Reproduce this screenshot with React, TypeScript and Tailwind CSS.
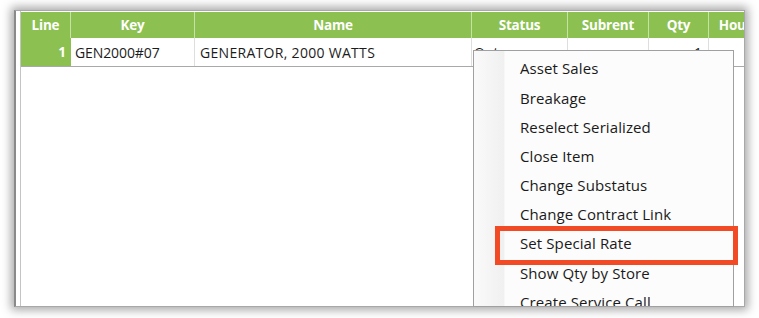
const columns = [
  { label: "Line", w: "w-[50px]" },
  { label: "Key", w: "w-[124px]" },
  { label: "Name", w: "w-[277px]" },
  { label: "Status", w: "w-[96px]" },
  { label: "Subrent", w: "w-[81px]" },
  { label: "Qty", w: "w-[60px]" },
  { label: "Hours", w: "w-[60px]" },
];

const menuItems = [
  "Asset Sales",
  "Breakage",
  "Reselect Serialized",
  "Close Item",
  "Change Substatus",
  "Change Contract Link",
  "Set Special Rate",
  "Show Qty by Store",
  "Create Service Call",
];

export default function App() {
  return (
    <div
      className="relative w-[759px] h-[318px] bg-white overflow-hidden"
      style={{ fontFamily: '"Open Sans", "Noto Sans", sans-serif' }}
    >
      <div className="absolute left-[14px] top-[10px] w-[731px] h-[297px] bg-white border-t border-r border-b border-l-2 border-[#a8a8a8] border-l-[#8a8a8a] shadow-[0_0_9px_3px_rgba(0,0,0,0.35)] overflow-hidden">
        <div className="flex h-full pl-[4px]">
          <div className="flex-1 flex flex-col border-l border-[#c4c4c4] overflow-hidden">
            {/* header */}
            <div className="flex h-[26px] bg-[#8cc152] mt-[1px] shrink-0">
              {columns.map((c) => (
                <div
                  key={c.label}
                  className={`${c.w} shrink-0 flex items-center justify-center border-r border-[#c6e3a6] text-white font-bold text-[13.5px] tracking-[-0.2px]`}
                >
                  {c.label}
                </div>
              ))}
            </div>
            {/* row */}
            <div className="flex h-[29px] border-b border-[#a9a9a9] shrink-0 text-[14px] text-[#1c1c1c]">
              <div className="w-[50px] shrink-0 bg-[#8cc152] text-white font-bold flex items-center justify-end pr-[5px] text-[13.5px]">
                1
              </div>
              <div className="w-[124px] shrink-0 flex items-center pl-[4px] border-r border-[#dedede] tracking-[-0.1px]">
                GEN2000#07
              </div>
              <div className="w-[277px] shrink-0 flex items-center pl-[5px] border-r border-[#dedede] tracking-[0.3px]">
                GENERATOR, 2000 WATTS
              </div>
              <div className="w-[96px] shrink-0 flex items-center pl-[2px] border-r border-[#dedede]">
                Out
              </div>
              <div className="w-[81px] shrink-0 border-r border-[#dedede]" />
              <div className="w-[60px] shrink-0 flex items-center justify-end pr-[6px] border-r border-[#dedede]">
                1
              </div>
              <div className="w-[60px] shrink-0" />
            </div>
          </div>
        </div>
      </div>

      {/* context menu */}
      <div className="absolute left-[473px] top-[50px] w-[261px] h-[257px] bg-[#fcfcfc] border border-[#a0a0a0] overflow-hidden">
        <div className="absolute left-0 top-0 bottom-0 w-[31px] bg-gradient-to-r from-[#fafafa] to-[#f0f0f0] border-r border-[#f7f7f7]" />
        <div className="relative flex flex-col pt-[3px]">
          {menuItems.map((m) => (
            <div
              key={m}
              className="h-[29.2px] flex items-center pl-[46px] text-[15px] text-[#1a1a1a] tracking-[0.1px] whitespace-nowrap"
            >
              {m}
            </div>
          ))}
        </div>
      </div>

      {/* highlight annotation */}
      <div className="absolute left-[495px] top-[226px] w-[243px] h-[39px] border-[5px] border-[#f24a25]" />
    </div>
  );
}
